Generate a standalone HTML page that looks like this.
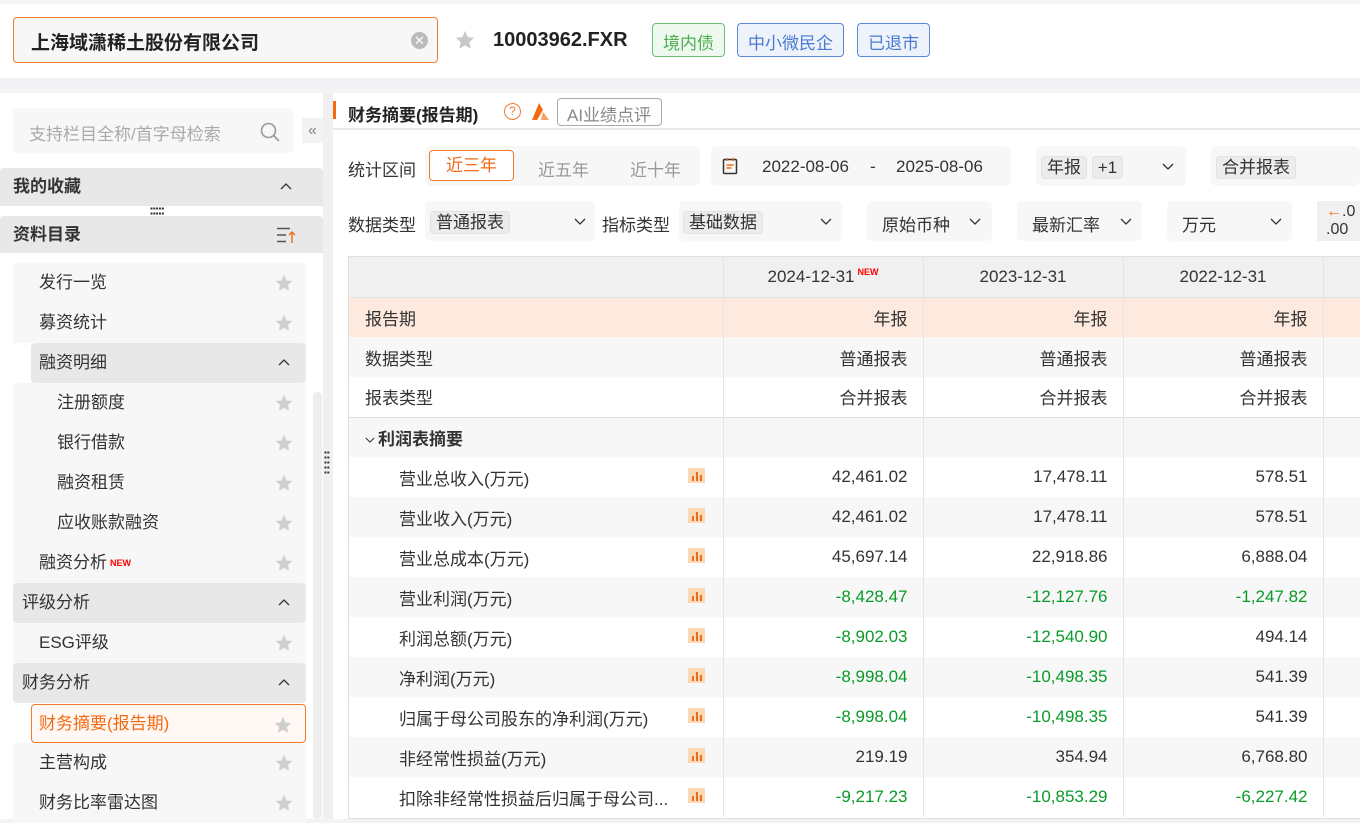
<!DOCTYPE html>
<html><head><meta charset="utf-8"><style>
*{box-sizing:border-box;margin:0;padding:0}
body{width:1360px;height:819px;overflow:hidden;background:#f3f3f5;font-family:"Liberation Sans","Noto Sans CJK SC",sans-serif;color:#333;position:relative;font-size:16px}
.a{position:absolute}
.top{left:0;top:4px;width:1360px;height:74px;background:#fff}
.search{left:13px;top:17px;width:425px;height:46px;border:1px solid #f07b2e;border-radius:4px;background:#f7f7f7;font-weight:bold;font-size:19px;padding:10px 0 0 17px;color:#222}
.tag{top:23px;height:34px;border-radius:4px;font-size:17px;padding:5px 10px 0;border:1px solid}
.side{left:0;top:93px;width:323px;height:726px;background:#fff}
.item{left:13px;width:293px;height:40px;background:#f7f7f7;font-size:17px;line-height:40px}
.grp{background:#e8e8e8;border-radius:4px}
.star{position:absolute;right:12px;top:10px;width:20px;height:20px}
.car{position:absolute;right:16px;top:15px;width:12px;height:8px}
.dn{position:absolute;width:12px;height:8px}
.main{left:333px;top:93px;width:1027px;height:726px;background:#fff}
.box{background:#f7f7f7;border-radius:6px;height:40px}
.chip{background:#ececec;border:1px solid #e2e2e2;border-radius:4px;padding:1px 5px}
.lbl{font-size:17px}
table{border-collapse:collapse;position:absolute;left:349px;top:257px;width:1011px;table-layout:fixed}
td{height:40px;border-right:1px solid #e4e4e4;font-size:17px;text-align:right;padding-right:15px;white-space:nowrap}
td:first-child{text-align:left;padding-left:16px}
tr.g td{background:#f7f7f7}
tr.h td{background:#f0f0f0;text-align:center;padding:0;border-bottom:1px solid #e0e0e0}
tr.p td{background:#fde9dd}
.gr{color:#0a9a2a}
.ic{float:right;margin-right:3px;margin-top:3px;width:17px;height:15px;background:#fbd9b8;position:relative}
.ic i{position:absolute;bottom:2px;width:2px;background:#f36b12}
.new{color:#f00;font-size:9px;font-weight:bold;vertical-align:top;margin-left:3px}
</style></head><body>
<svg width="0" height="0" style="position:absolute"><defs>
<symbol id="up" viewBox="0 0 12 8"><path d="M1 7l5-5 5 5" fill="none" stroke="#333" stroke-width="1.3"/></symbol>
<symbol id="down" viewBox="0 0 12 8"><path d="M1 1l5 5 5-5" fill="none" stroke="#333" stroke-width="1.3"/></symbol>
</defs></svg>
<div class="a" style="left:0;top:0;width:1360px;height:4px;background:#f5f5f7"></div>
<div class="a top"></div>
<div class="a search">上海域潇稀土股份有限公司</div>
<div class="a" style="left:411px;top:32px;width:17px;height:17px;border-radius:50%;background:#bbb;color:#fff;font-size:13px;text-align:center;line-height:17px">✕</div>
<svg class="a" style="left:454px;top:29px" width="22" height="22" viewBox="0 0 24 24"><path d="M12 2l3 7 7 .6-5.3 4.7 1.6 7.2L12 17.8 5.7 21.5l1.6-7.2L2 9.6 9 9z" fill="#c8c8c8"/></svg>
<div class="a" style="left:493px;top:29px;font-size:20px;font-weight:bold;color:#222">10003962.FXR</div>
<div class="a tag" style="left:652px;color:#4caf50;border-color:#6cc070;background:#eef8ee">境内债</div>
<div class="a tag" style="left:737px;color:#4a7bd0;border-color:#5a87d6;background:#edf2fb">中小微民企</div>
<div class="a tag" style="left:857px;color:#4a7bd0;border-color:#5a87d6;background:#edf2fb">已退市</div>

<div class="a side"></div>
<div class="a" style="left:13px;top:108px;width:280px;height:45px;background:#f7f7f7;border-radius:6px;color:#aaa;font-size:17px;padding:12px 0 0 16px">支持栏目全称/首字母检索</div>
<svg class="a" style="left:259px;top:121px" width="22" height="22" viewBox="0 0 22 22"><circle cx="9.5" cy="9.5" r="7" stroke="#999" stroke-width="1.6" fill="none"/><path d="M15 15l5 5" stroke="#999" stroke-width="1.6"/></svg>
<div class="a" style="left:302px;top:118px;width:21px;height:25px;background:#f3f3f3;color:#888;font-size:16px;text-align:center;line-height:25px">«</div>
<div class="a item grp" style="left:0;width:323px;top:168px;height:38px;border-radius:4px 4px 0 0;font-weight:bold;padding-left:13px;line-height:38px">我的收藏<svg class="car" style="right:31px;top:14px"><use href="#up"/></svg></div>
<div class="a" style="left:150px;top:206px;font-size:8px;letter-spacing:0;color:#333;line-height:5px">▪▪▪▪▪<br>▪▪▪▪▪</div>
<div class="a item grp" style="left:0;width:323px;top:216px;height:37px;border-radius:4px 4px 0 0;font-weight:bold;padding-left:13px;line-height:37px">资料目录
<svg class="a" style="left:277px;top:11px" width="20" height="17" viewBox="0 0 20 17"><path d="M0 1.5h13M0 8h9M0 14.5h9" stroke="#555" stroke-width="1.4"/><path d="M15 16V5M12 8l3-3 3 3" stroke="#f36b12" stroke-width="1.4" fill="none"/></svg></div>
<div class="a" style="left:313px;top:392px;width:9px;height:427px;background:#eee;border-radius:4px"></div>
<div class="a" style="left:323px;top:93px;width:10px;height:726px;background:#f0f0f0"></div>
<div class="a" style="left:324px;top:450px;font-size:8px;line-height:5px;color:#333">▪▪<br>▪▪<br>▪▪<br>▪▪<br>▪▪</div>

<div id="nav"></div>

<div class="a main"></div>
<div class="a" style="left:333px;top:101px;width:3px;height:18px;background:#f36b12"></div>
<div class="a" style="left:348px;top:101px;font-size:17px;font-weight:bold;color:#222">财务摘要(报告期)</div>
<div class="a" style="left:504px;top:103px;width:17px;height:17px;border:1.5px solid #f07b2e;border-radius:50%;color:#f07b2e;font-size:12px;text-align:center;line-height:14px">?</div>
<svg class="a" style="left:530px;top:102px" width="22" height="20" viewBox="0 0 22 20"><path d="M9 1l4 7-6 10H2z" fill="#f36b12"/><path d="M13 10l6 8h-8z" fill="#f8a060"/></svg>
<div class="a" style="left:557px;top:98px;width:105px;height:28px;border:1px solid #aaa;border-radius:4px;color:#888;font-size:17px;padding:2px 0 0 9px">AI业绩点评</div>
<div class="a" style="left:333px;top:128px;width:1027px;height:2px;background:#e8e8e8"></div>

<div class="a lbl" style="left:348px;top:156px">统计区间</div>
<div class="a box" style="left:425px;top:146px;width:275px"></div>
<div class="a" style="left:429px;top:150px;width:85px;height:31px;border:1px solid #f07b2e;border-radius:4px;background:#fff;color:#f36b12;font-size:17px;text-align:center;line-height:29px">近三年</div>
<div class="a lbl" style="left:538px;top:156px;color:#999">近五年</div>
<div class="a lbl" style="left:630px;top:156px;color:#999">近十年</div>
<div class="a box" style="left:711px;top:146px;width:300px"></div>
<svg class="a" style="left:722px;top:157px" width="16" height="18" viewBox="0 0 16 18"><rect x="1.5" y="2.5" width="13" height="14" rx="1" fill="none" stroke="#333" stroke-width="1.5"/><path d="M5 1v3M11 1v3M4.5 8h7M4.5 11h5" stroke="#f36b12" stroke-width="1.4"/></svg>
<div class="a lbl" style="left:762px;top:157px">2022-08-06</div>
<div class="a lbl" style="left:870px;top:157px">-</div>
<div class="a lbl" style="left:896px;top:157px">2025-08-06</div>
<div class="a box" style="left:1036px;top:146px;width:150px"></div>
<div class="a lbl" style="left:1041px;top:153px"><span class="chip">年报</span> <span class="chip">+1</span></div>
<svg class="dn" style="left:1162px;top:163px"><use href="#down"/></svg>
<div class="a box" style="left:1211px;top:146px;width:149px"></div>
<div class="a lbl" style="left:1216px;top:153px"><span class="chip">合并报表</span></div>

<div class="a lbl" style="left:348px;top:211px">数据类型</div>
<div class="a box" style="left:425px;top:201px;width:170px"></div>
<div class="a lbl" style="left:430px;top:208px"><span class="chip">普通报表</span></div>
<svg class="dn" style="left:574px;top:218px"><use href="#down"/></svg>
<div class="a lbl" style="left:602px;top:211px">指标类型</div>
<div class="a box" style="left:679px;top:201px;width:163px"></div>
<div class="a lbl" style="left:683px;top:208px"><span class="chip">基础数据</span></div>
<svg class="dn" style="left:820px;top:218px"><use href="#down"/></svg>
<div class="a box" style="left:867px;top:201px;width:125px"></div>
<div class="a lbl" style="left:882px;top:211px">原始币种</div>
<svg class="dn" style="left:969px;top:218px"><use href="#down"/></svg>
<div class="a box" style="left:1017px;top:201px;width:125px"></div>
<div class="a lbl" style="left:1032px;top:211px">最新汇率</div>
<svg class="dn" style="left:1120px;top:218px"><use href="#down"/></svg>
<div class="a box" style="left:1167px;top:201px;width:125px"></div>
<div class="a lbl" style="left:1182px;top:211px">万元</div>
<svg class="dn" style="left:1270px;top:218px"><use href="#down"/></svg>
<div class="a" style="left:1317px;top:201px;width:43px;height:40px;background:#f0f0f0;font-size:16px;line-height:18px;padding:2px 0 0 9px"><span style="color:#f36b12">←</span>.0<br>.00</div>

<div class="a" style="left:348px;top:256px;width:1012px;height:563px;border:1px solid #e0e0e0;border-right:none"></div>
<table>
<colgroup><col style="width:374px"><col style="width:200px"><col style="width:200px"><col style="width:200px"><col style="width:37px"></colgroup>
<tr class="h"><td></td><td>2024-12-31<span class="new">NEW</span></td><td>2023-12-31</td><td>2022-12-31</td><td></td></tr>
<tr class="p"><td>报告期</td><td>年报</td><td>年报</td><td>年报</td><td></td></tr>
<tr class="g"><td>数据类型</td><td>普通报表</td><td>普通报表</td><td>普通报表</td><td></td></tr>
<tr><td>报表类型</td><td>合并报表</td><td>合并报表</td><td>合并报表</td><td></td></tr>
<tr class="g"><td style="font-weight:bold;border-top:1px solid #e0e0e0"><svg width="10" height="7" viewBox="0 0 12 8" style="margin-right:3px;vertical-align:middle"><path d="M1 1l5 5 5-5" fill="none" stroke="#333" stroke-width="1.3"/></svg>利润表摘要</td><td style="border-top:1px solid #e0e0e0"></td><td style="border-top:1px solid #e0e0e0"></td><td style="border-top:1px solid #e0e0e0"></td><td style="border-top:1px solid #e0e0e0"></td></tr>
<tbody id="rows"></tbody>
</table>
<script>
var nav=[["发行一览",0],["募资统计",0],["融资明细",2],["注册额度",1],["银行借款",1],["融资租赁",1],["应收账款融资",1],["融资分析",3],["评级分析",4],["ESG评级",0],["财务分析",4],["财务摘要(报告期)",5],["主营构成",0],["财务比率雷达图",0]];
var h='',y=263;var st='<svg class="star" viewBox="0 0 24 24"><path d="M12 2l3 7 7 .6-5.3 4.7 1.6 7.2L12 17.8 5.7 21.5l1.6-7.2L2 9.6 9 9z" fill="#cfcfcf"/></svg>';
var cu='<svg class="car"><use href="#up"/></svg>';
nav.forEach(function(n){var t=n[0],k=n[1];
if(k==4)h+='<div class="a item grp" style="top:'+y+'px;padding-left:9px">'+t+cu+'</div>';
else if(k==2)h+='<div class="a item grp" style="left:31px;width:275px;top:'+y+'px;padding-left:8px">'+t+cu+'</div>';
else if(k==5)h+='<div class="a item" style="left:31px;width:275px;top:'+(y+1)+'px;height:39px;line-height:37px;background:#fff8f4;border:1px solid #f07b2e;border-radius:4px;color:#f36b12;padding-left:7px">'+t+st+'</div>';
else h+='<div class="a item" style="top:'+y+'px;padding-left:'+(k==1?44:26)+'px">'+t+(k==3?'<span class="new">NEW</span>':'')+st+'</div>';
y+=40;});
document.getElementById('nav').innerHTML=h;
var R=[["营业总收入(万元)","42,461.02","17,478.11","578.51"],["营业收入(万元)","42,461.02","17,478.11","578.51"],["营业总成本(万元)","45,697.14","22,918.86","6,888.04"],["营业利润(万元)","-8,428.47","-12,127.76","-1,247.82"],["利润总额(万元)","-8,902.03","-12,540.90","494.14"],["净利润(万元)","-8,998.04","-10,498.35","541.39"],["归属于母公司股东的净利润(万元)","-8,998.04","-10,498.35","541.39"],["非经常性损益(万元)","219.19","354.94","6,768.80"],["扣除非经常性损益后归属于母公司...","-9,217.23","-10,853.29","-6,227.42"]];
var s='';R.forEach(function(r,i){s+='<tr'+(i%2?' class="g"':'')+'><td style="padding-left:50px">'+r[0]+'<span class="ic"><i style="left:4px;height:5px"></i><i style="left:8px;height:9px"></i><i style="left:12px;height:6px"></i></span></td>';
for(var j=1;j<4;j++)s+='<td'+(r[j][0]=='-'?' class="gr"':'')+'>'+r[j]+'</td>';s+='<td></td></tr>';});
document.getElementById('rows').innerHTML=s;
</script>
</body></html>
